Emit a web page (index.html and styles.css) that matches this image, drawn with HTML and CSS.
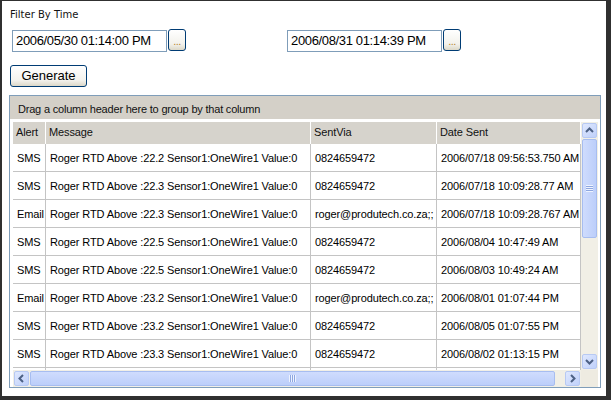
FILE: index.html
```html
<!DOCTYPE html>
<html>
<head>
<meta charset="utf-8">
<link rel="stylesheet" href="styles.css">
</head>
<body>
<div class="window">
  <div class="label">Filter By Time</div>
  <div class="filters">
    <div class="picker">
      <div class="field">2006/05/30 01:14:00 PM</div>
      <div class="dots">...</div>
    </div>
    <div class="picker second">
      <div class="field">2006/08/31 01:14:39 PM</div>
      <div class="dots">...</div>
    </div>
  </div>
  <div class="generate">Generate</div>
  <div class="grid">
    <div class="group-panel">Drag a column header here to group by that column</div>
    <div class="data">
      <div class="main">
        <div class="table">
          <div class="hd">Alert</div><div class="hd">Message</div><div class="hd">SentVia</div><div class="hd">Date Sent</div>

          <div class="c">SMS</div><div class="c">Roger RTD Above :22.2 Sensor1:OneWire1 Value:0</div><div class="c">0824659472</div><div class="c">2006/07/18 09:56:53.750 AM</div>
          <div class="c">SMS</div><div class="c">Roger RTD Above :22.3 Sensor1:OneWire1 Value:0</div><div class="c">0824659472</div><div class="c">2006/07/18 10:09:28.77 AM</div>
          <div class="c">Email</div><div class="c">Roger RTD Above :22.3 Sensor1:OneWire1 Value:0</div><div class="c">roger@produtech.co.za;;</div><div class="c">2006/07/18 10:09:28.767 AM</div>
          <div class="c">SMS</div><div class="c">Roger RTD Above :22.5 Sensor1:OneWire1 Value:0</div><div class="c">0824659472</div><div class="c">2006/08/04 10:47:49 AM</div>
          <div class="c">SMS</div><div class="c">Roger RTD Above :22.5 Sensor1:OneWire1 Value:0</div><div class="c">0824659472</div><div class="c">2006/08/03 10:49:24 AM</div>
          <div class="c">Email</div><div class="c">Roger RTD Above :23.2 Sensor1:OneWire1 Value:0</div><div class="c">roger@produtech.co.za;;</div><div class="c">2006/08/01 01:07:44 PM</div>
          <div class="c">SMS</div><div class="c">Roger RTD Above :23.2 Sensor1:OneWire1 Value:0</div><div class="c">0824659472</div><div class="c">2006/08/05 01:07:55 PM</div>
          <div class="c">SMS</div><div class="c">Roger RTD Above :23.3 Sensor1:OneWire1 Value:0</div><div class="c">0824659472</div><div class="c">2006/08/02 01:13:15 PM</div>
          <div class="c"></div><div class="c"></div><div class="c"></div><div class="c"></div>
        </div>
        <div class="vscroll">
          <div class="sb-btn"><svg width="15" height="15" viewBox="0 0 15 15"><polyline points="4,9 7.5,5.5 11,9" fill="none" stroke="#4d6185" stroke-width="2"/></svg></div>
          <div class="thumb v"><span class="grip"></span></div>
          <div class="track"></div>
          <div class="sb-btn"><svg width="15" height="15" viewBox="0 0 15 15"><polyline points="4,6 7.5,9.5 11,6" fill="none" stroke="#4d6185" stroke-width="2"/></svg></div>
        </div>
      </div>
      <div class="bottom">
        <div class="hscroll">
          <div class="sb-btn"><svg width="15" height="15" viewBox="0 0 15 15"><polyline points="9,4 5.5,7.5 9,11" fill="none" stroke="#4d6185" stroke-width="2"/></svg></div>
          <div class="thumb h"><span class="grip"></span></div>
          <div class="track"></div>
          <div class="sb-btn"><svg width="15" height="15" viewBox="0 0 15 15"><polyline points="6,4 9.5,7.5 6,11" fill="none" stroke="#4d6185" stroke-width="2"/></svg></div>
        </div>
        <div class="corner"></div>
      </div>
    </div>
  </div>
</div>
</body>
</html>
```

FILE: styles.css
```css
* { box-sizing: border-box; }
html, body { margin: 0; height: 100%; }
body {
  background: #303030;
  padding: 1px 5px 4px 2px;
  font-family: "Liberation Sans", Arial, sans-serif;
  color: #000;
}
.window {
  background: #fff;
  height: 395px;
  padding: 8px 0 0 8px;
  display: flex;
  flex-direction: column;
  align-items: flex-start;
}
.label {
  font-family: "DejaVu Sans", Verdana, sans-serif;
  font-size: 10px;
  line-height: 12px;
  color: #111;
}
.filters {
  display: flex;
  margin: 8px 0 0 2px;
}
.picker {
  display: flex;
  align-items: flex-start;
  gap: 1px;
}
.picker.second { margin-left: 101px; }
.field {
  width: 155px;
  height: 22px;
  margin-top: 1px;
  border: 1px solid #7f9db9;
  padding: 0 3px;
  font-size: 13px;
  line-height: 20px;
  letter-spacing: -0.35px;
  white-space: nowrap;
  overflow: hidden;
}
.dots {
  width: 18px;
  height: 22px;
  border: 1px solid #003c74;
  border-radius: 3px;
  background: linear-gradient(#ffffff, #f3f2ec 70%, #dcd8c8);
  color: #b8862e;
  font-size: 11px;
  line-height: 22px;
  text-align: center;
  letter-spacing: -0.5px;
}
.generate {
  margin-top: 13px;
  width: 77px;
  height: 22px;
  border: 1px solid #003c74;
  border-radius: 3px;
  background: linear-gradient(#ffffff, #f4f3ee 70%, #dcd8c8);
  font-size: 13px;
  line-height: 20px;
  text-align: center;
}
.grid {
  margin: 8px 0 0 -1px;
  width: 592px;
  height: 293px;
  border: 1px solid #7f9db9;
  display: flex;
  flex-direction: column;
}
.group-panel {
  height: 23px;
  background: #d4d0c8;
  font-size: 11px;
  line-height: 20px;
  letter-spacing: -0.2px;
  padding: 3px 0 0 8px;
  color: #111;
}
.data {
  padding: 3px 2px 0 3px;
  display: flex;
  flex-direction: column;
}
.main {
  display: flex;
  height: 248px;
}
.table {
  width: 568px;
  height: 248px;
  overflow: hidden;
  display: grid;
  grid-template-columns: 33px 265px 126px 144px;
  grid-template-rows: 22px;
  grid-auto-rows: 28px;
  font-size: 11px;
  letter-spacing: -0.12px;
}
.hd {
  background: #d6d3cc;
  border-right: 1px solid #fff;
  padding: 0 0 0 3px;
  line-height: 21px;
  white-space: nowrap;
  overflow: hidden;
  color: #111;
}
.c {
  border-right: 1px solid #c4c4c4;
  border-bottom: 1px solid #c4c4c4;
  padding: 2px 0 0 4px;
  line-height: 25px;
  white-space: nowrap;
  overflow: hidden;
}
.vscroll {
  width: 17px;
  height: 248px;
  background: #f1efe6;
  display: flex;
  flex-direction: column;
}
.sb-btn {
  width: 15px;
  height: 15px;
  margin: 1px;
  border-radius: 2px;
  border: 1px solid #b7c9f3;
  background: linear-gradient(135deg, #dfe8fe, #bfd0fa);
  display: flex;
  align-items: center;
  justify-content: center;
  flex: none;
}
.sb-btn svg { display: block; margin: -1px; }
.thumb {
  border: 1px solid #a7bdf0;
  border-radius: 2px;
  display: flex;
  align-items: center;
  justify-content: center;
  flex: none;
}
.thumb.v {
  width: 15px;
  height: 99px;
  margin: 0 1px;
  background: linear-gradient(90deg, #cfdcfd, #bccefa);
}
.thumb.h {
  height: 15px;
  width: 525px;
  margin: 1px 0;
  background: linear-gradient(#cfdcfd, #bccefa);
}
.grip { display: block; }
.thumb.v .grip {
  width: 7px;
  height: 7px;
  background: repeating-linear-gradient(#eef3ff 0 1px, #8ea7e0 1px 2px);
}
.thumb.h .grip {
  width: 7px;
  height: 7px;
  background: repeating-linear-gradient(90deg, #eef3ff 0 1px, #8ea7e0 1px 2px);
}
.track { flex: 1; }
.bottom {
  display: flex;
  height: 17px;
}
.hscroll {
  width: 568px;
  height: 17px;
  background: #f1efe6;
  display: flex;
}
.corner {
  width: 17px;
  height: 17px;
  background: #eeebe1;
}
```
